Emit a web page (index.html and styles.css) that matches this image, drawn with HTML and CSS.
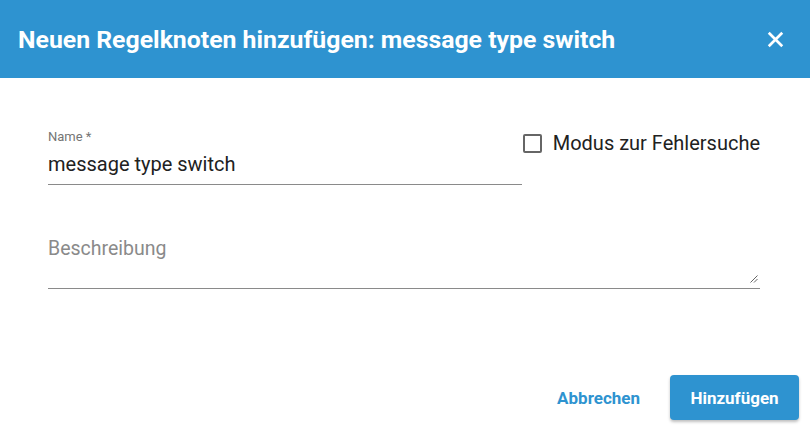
FILE: index.html
```html
<!DOCTYPE html>
<html lang="de">
<head>
    <meta charset="UTF-8">
    <meta name="viewport" content="width=device-width, initial-scale=1.0">
    <title>Neuen Regelknoten hinzufügen</title>
    <link rel="stylesheet" href="styles.css">
</head>
<body>
    <div class="dialog">
        <div class="dialog-header">
            <h2 class="dialog-title">Neuen Regelknoten hinzufügen: message type switch</h2>
            <button class="close-btn" aria-label="Schließen">
                <svg width="24" height="24" viewBox="0 0 24 24"><path d="M6 6 18 18 M18 6 6 18" stroke="#fff" stroke-width="2.4" fill="none"/></svg>
            </button>
        </div>
        <div class="dialog-content">
            <div class="row">
                <div class="field name-field">
                    <label class="field-label">Name *</label>
                    <div class="field-value">message type switch</div>
                </div>
                <label class="checkbox">
                    <span class="checkbox-box"></span>
                    <span class="checkbox-text">Modus zur Fehlersuche</span>
                </label>
            </div>
            <div class="field desc-field">
                <div class="placeholder">Beschreibung</div>
                <svg class="resize" width="8" height="8" viewBox="0 0 8 8"><path d="M7.5 0.5 0.5 7.5 M7.5 4 4 7.5" stroke="#555" stroke-width="0.9" fill="none"/></svg>
            </div>
        </div>
        <div class="dialog-actions">
            <button class="btn btn-text">Abbrechen</button>
            <button class="btn btn-primary">Hinzufügen</button>
        </div>
    </div>
</body>
</html>
```
FILE: styles.css
```css
body {
    margin: 0;
    font-family: Roboto, "Liberation Sans", sans-serif;
    background-color: #fff;
}
.dialog {
    width: 810px;
    height: 430px;
    display: flex;
    flex-direction: column;
}
.dialog-header {
    height: 78px;
    flex-shrink: 0;
    background-color: #2e93d0;
    display: flex;
    align-items: center;
    justify-content: space-between;
    padding: 0 18px;
}
.dialog-title {
    margin: 0;
    color: #fff;
    font-size: 24.8px;
    font-weight: 700;
}
.close-btn {
    background: none;
    border: none;
    padding: 0;
    margin-right: 3px;
    display: flex;
}
.close-btn svg {
    width: 27px;
    height: 27px;
}
.dialog-content {
    padding: 50px 50px 0 48px;
    flex: 1;
}
.row {
    display: flex;
    align-items: flex-start;
}
.field {
    border-bottom: 1px solid #8a8a8a;
}
.name-field {
    flex: 1;
    padding-bottom: 6px;
}
.field-label {
    display: block;
    font-size: 13px;
    line-height: 18px;
    color: #757575;
}
.field-value {
    font-size: 20px;
    line-height: 28px;
    margin-top: 4px;
    color: #212121;
}
.checkbox {
    display: flex;
    align-items: center;
    margin-top: 1px;
    margin-left: 1px;
}
.checkbox-box {
    width: 15px;
    height: 15px;
    border: 2px solid #666;
    border-radius: 2px;
    margin-right: 11px;
}
.checkbox-text {
    font-size: 20px;
    line-height: 28px;
    color: #212121;
}
.desc-field {
    margin-top: 44px;
    height: 59px;
    position: relative;
}
.placeholder {
    font-size: 19.5px;
    line-height: 28px;
    color: #8a8a8a;
    padding-top: 6px;
}
.resize {
    position: absolute;
    right: 2px;
    bottom: 5px;
}
.dialog-actions {
    display: flex;
    justify-content: flex-end;
    align-items: center;
    padding: 0 11px 10px 0;
    gap: 14px;
}
.btn {
    font-family: Roboto, "Liberation Sans", sans-serif;
    font-size: 17px;
    font-weight: 700;
    border: none;
    border-radius: 4px;
    height: 45px;
    padding: 0 16px;
}
.btn-text {
    background: none;
    color: #2e93d0;
}
.btn-primary {
    background-color: #2e93d0;
    color: #fff;
    width: 129px;
    box-shadow: 0 2px 3px rgba(0, 0, 0, 0.25);
}
```
